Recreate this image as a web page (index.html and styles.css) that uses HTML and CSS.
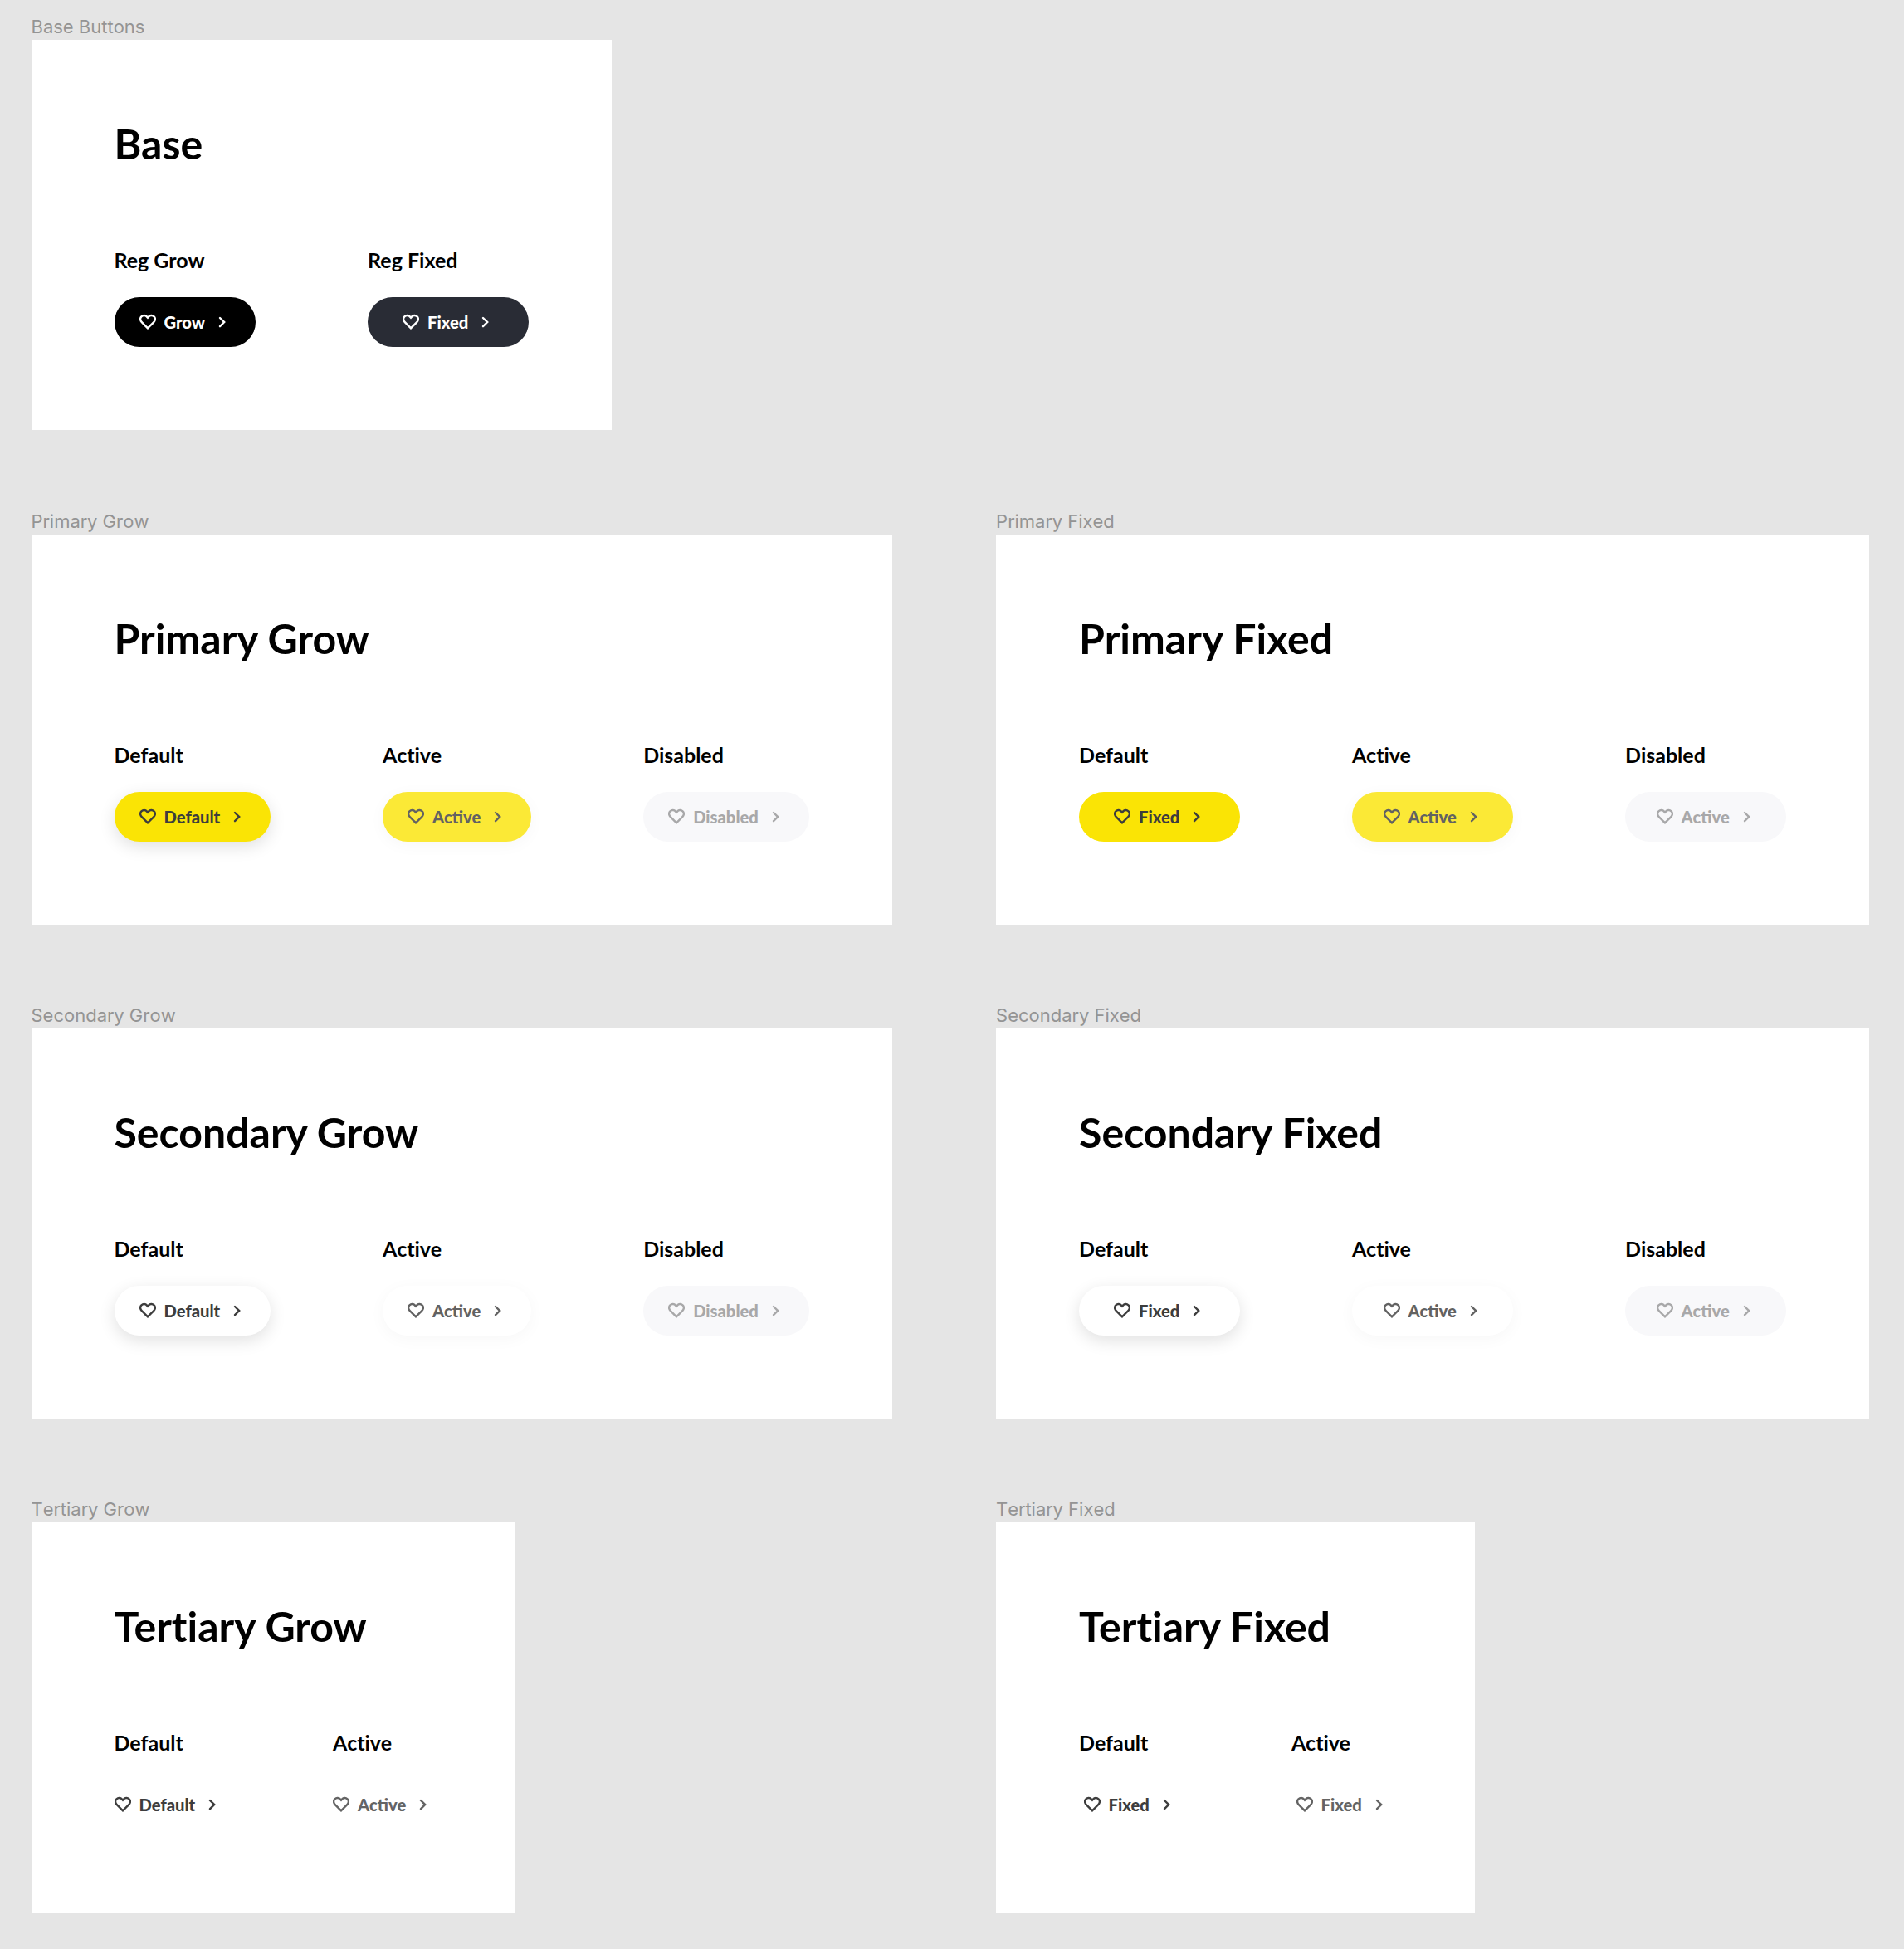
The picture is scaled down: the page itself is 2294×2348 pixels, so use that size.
FILE: index.html
```html
<!DOCTYPE html>
<html lang="en">
<head>
<meta charset="utf-8">
<title>Buttons</title>
<link rel="stylesheet" href="styles.css">
</head>
<body>
<svg class="sprite" aria-hidden="true">
  <symbol id="heart" viewBox="0 0 20 20"><path d="M10 17.3 2.8 10.1C.6 7.9.6 5 2.4 3.3 4.4 1.5 7.3 1.7 9 3.6L10 4.7 11 3.6C12.7 1.7 15.6 1.5 17.6 3.3 19.4 5 19.4 7.9 17.2 10.1Z"/></symbol>
  <symbol id="chevron" viewBox="0 0 20 20"><path d="M7 5 12.2 10.1 7 15.2"/></symbol>
</svg>
<main class="canvas">
  <section class="frame frame--solo">
    <div class="frame__label">Base Buttons</div>
    <div class="card">
      <h1 class="card__title">Base</h1>
      <div class="states">
        <div class="state"><h2 class="state__name">Reg Grow</h2><button class="btn btn--black"><svg class="icon"><use href="#heart"/></svg><span class="btn__text">Grow</span><svg class="icon"><use href="#chevron"/></svg></button></div>
        <div class="state"><h2 class="state__name">Reg Fixed</h2><button class="btn btn--fixed btn--ink"><svg class="icon"><use href="#heart"/></svg><span class="btn__text">Fixed</span><svg class="icon"><use href="#chevron"/></svg></button></div>
      </div>
    </div>
  </section>

  <section class="frame">
    <div class="frame__label">Primary Grow</div>
    <div class="card">
      <h1 class="card__title">Primary Grow</h1>
      <div class="states">
        <div class="state"><h2 class="state__name">Default</h2><button class="btn btn--primary btn--raised"><svg class="icon"><use href="#heart"/></svg><span class="btn__text">Default</span><svg class="icon"><use href="#chevron"/></svg></button></div>
        <div class="state"><h2 class="state__name">Active</h2><button class="btn btn--primary btn--active"><svg class="icon"><use href="#heart"/></svg><span class="btn__text">Active</span><svg class="icon"><use href="#chevron"/></svg></button></div>
        <div class="state"><h2 class="state__name">Disabled</h2><button class="btn btn--disabled"><svg class="icon"><use href="#heart"/></svg><span class="btn__text">Disabled</span><svg class="icon"><use href="#chevron"/></svg></button></div>
      </div>
    </div>
  </section>
  <section class="frame">
    <div class="frame__label">Primary Fixed</div>
    <div class="card">
      <h1 class="card__title">Primary Fixed</h1>
      <div class="states">
        <div class="state"><h2 class="state__name">Default</h2><button class="btn btn--fixed btn--primary"><svg class="icon"><use href="#heart"/></svg><span class="btn__text">Fixed</span><svg class="icon"><use href="#chevron"/></svg></button></div>
        <div class="state"><h2 class="state__name">Active</h2><button class="btn btn--fixed btn--primary btn--active"><svg class="icon"><use href="#heart"/></svg><span class="btn__text">Active</span><svg class="icon"><use href="#chevron"/></svg></button></div>
        <div class="state"><h2 class="state__name">Disabled</h2><button class="btn btn--fixed btn--disabled"><svg class="icon"><use href="#heart"/></svg><span class="btn__text">Active</span><svg class="icon"><use href="#chevron"/></svg></button></div>
      </div>
    </div>
  </section>

  <section class="frame">
    <div class="frame__label">Secondary Grow</div>
    <div class="card">
      <h1 class="card__title">Secondary Grow</h1>
      <div class="states">
        <div class="state"><h2 class="state__name">Default</h2><button class="btn btn--secondary btn--raised"><svg class="icon"><use href="#heart"/></svg><span class="btn__text">Default</span><svg class="icon"><use href="#chevron"/></svg></button></div>
        <div class="state"><h2 class="state__name">Active</h2><button class="btn btn--secondary btn--active"><svg class="icon"><use href="#heart"/></svg><span class="btn__text">Active</span><svg class="icon"><use href="#chevron"/></svg></button></div>
        <div class="state"><h2 class="state__name">Disabled</h2><button class="btn btn--disabled"><svg class="icon"><use href="#heart"/></svg><span class="btn__text">Disabled</span><svg class="icon"><use href="#chevron"/></svg></button></div>
      </div>
    </div>
  </section>
  <section class="frame">
    <div class="frame__label">Secondary Fixed</div>
    <div class="card">
      <h1 class="card__title">Secondary Fixed</h1>
      <div class="states">
        <div class="state"><h2 class="state__name">Default</h2><button class="btn btn--fixed btn--secondary btn--raised"><svg class="icon"><use href="#heart"/></svg><span class="btn__text">Fixed</span><svg class="icon"><use href="#chevron"/></svg></button></div>
        <div class="state"><h2 class="state__name">Active</h2><button class="btn btn--fixed btn--secondary btn--active"><svg class="icon"><use href="#heart"/></svg><span class="btn__text">Active</span><svg class="icon"><use href="#chevron"/></svg></button></div>
        <div class="state"><h2 class="state__name">Disabled</h2><button class="btn btn--fixed btn--disabled"><svg class="icon"><use href="#heart"/></svg><span class="btn__text">Active</span><svg class="icon"><use href="#chevron"/></svg></button></div>
      </div>
    </div>
  </section>

  <section class="frame">
    <div class="frame__label">Tertiary Grow</div>
    <div class="card">
      <h1 class="card__title">Tertiary Grow</h1>
      <div class="states">
        <div class="state"><h2 class="state__name">Default</h2><button class="btn btn--tertiary"><svg class="icon"><use href="#heart"/></svg><span class="btn__text">Default</span><svg class="icon"><use href="#chevron"/></svg></button></div>
        <div class="state"><h2 class="state__name">Active</h2><button class="btn btn--tertiary btn--pressed"><svg class="icon"><use href="#heart"/></svg><span class="btn__text">Active</span><svg class="icon"><use href="#chevron"/></svg></button></div>
      </div>
    </div>
  </section>
  <section class="frame">
    <div class="frame__label">Tertiary Fixed</div>
    <div class="card">
      <h1 class="card__title">Tertiary Fixed</h1>
      <div class="states">
        <div class="state"><h2 class="state__name">Default</h2><button class="btn btn--tertiary btn--tertiary-fixed"><svg class="icon"><use href="#heart"/></svg><span class="btn__text">Fixed</span><svg class="icon"><use href="#chevron"/></svg></button></div>
        <div class="state"><h2 class="state__name">Active</h2><button class="btn btn--tertiary btn--tertiary-fixed btn--pressed"><svg class="icon"><use href="#heart"/></svg><span class="btn__text">Fixed</span><svg class="icon"><use href="#chevron"/></svg></button></div>
      </div>
    </div>
  </section>
</main>
</body>
</html>
```
FILE: styles.css
```css
* { box-sizing: border-box; }

body {
  margin: 0;
  background: #e5e5e5;
  font-family: Lato, sans-serif;
  color: #000;
}

.sprite { display: none; }

.canvas {
  display: grid;
  grid-template-columns: 1162.6px auto;
  grid-auto-rows: 595.4px;
  justify-content: start;
  height: 2348px;
  padding: 18.3px 0 0 37.5px;
  overflow: hidden;
}

.frame {
  display: flex;
  flex-direction: column;
  align-items: flex-start;
}

.frame--solo { grid-column: 1 / -1; }

.frame__label {
  height: 30px;
  font: 400 22px/28px Inter, sans-serif;
  font-kerning: none;
  color: #949494;
}

.card {
  height: 470.1px;
  padding: 100px;
  background: #fff;
}

.card__title {
  margin: 0 0 100px;
  font-size: 50px;
  font-weight: 700;
  line-height: 50px;
  font-variant-ligatures: none;
  white-space: nowrap;
}

.states {
  display: flex;
  gap: 135px;
}

.state {
  display: flex;
  flex-direction: column;
  align-items: flex-start;
  gap: 30px;
}

.state__name {
  margin: 0;
  font-size: 25px;
  font-weight: 700;
  line-height: 30px;
  font-variant-ligatures: none;
}

.btn {
  display: flex;
  align-items: center;
  justify-content: center;
  gap: 10px;
  height: 60px;
  padding: 0 30px;
  border: 0;
  border-radius: 30px;
  background: none;
  color: #3d3d3d;
  font: 900 20.2px/24px Lato, sans-serif;
}

.btn__text { margin-right: .9px; }

.btn--fixed {
  width: 194px;
  padding: 0;
}

.btn--black { background: #000; color: #fff; }
.btn--ink { background: #292c35; color: #fff; }
.btn--primary { background: #fae405; }
.btn--secondary { background: #fff; }
.btn--raised { box-shadow: 0 6px 20px rgba(0, 0, 0, .12); }

.btn--active {
  color: #626262;
  box-shadow: 0 4px 20px rgba(0, 0, 0, .035);
}

.btn--primary.btn--active { background: #fbe936; }
.btn--disabled { background: #f8f8fa; color: #a8a8a9; }
.btn--tertiary { padding: 0; }
.btn--tertiary-fixed { width: 121px; }
.btn--pressed { color: #646464; }

.icon {
  width: 20px;
  height: 20px;
  fill: none;
  stroke: currentColor;
  stroke-width: 2.4;
  stroke-linecap: round;
}
```
